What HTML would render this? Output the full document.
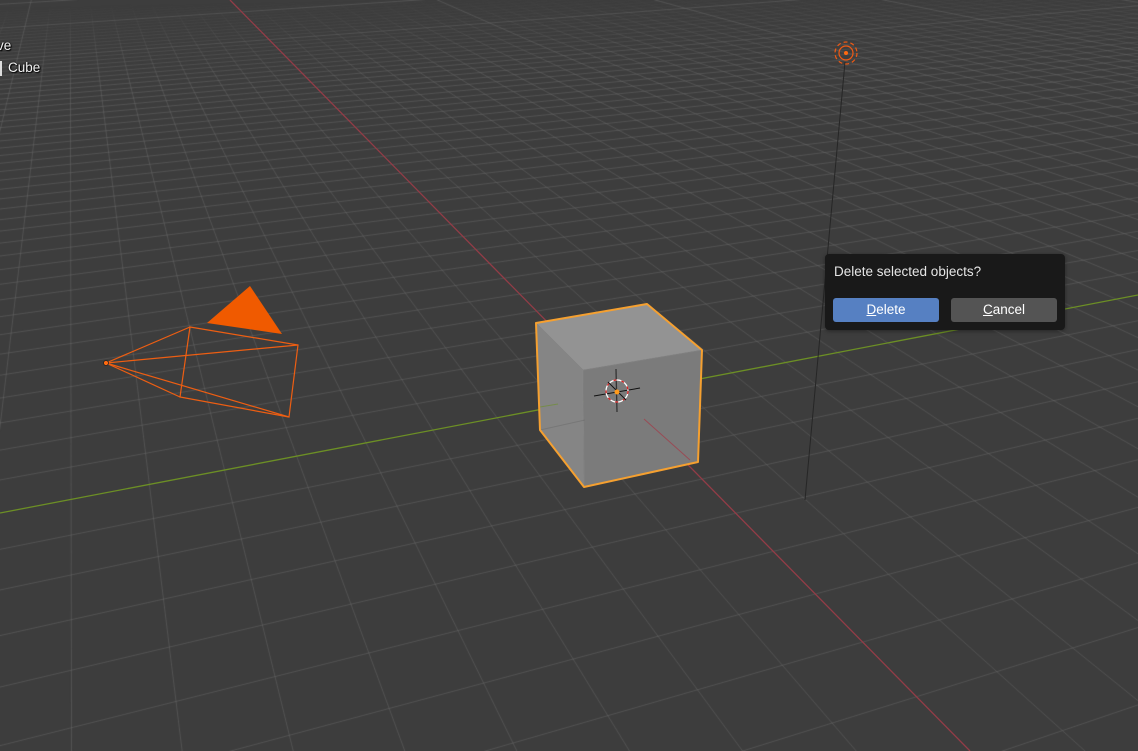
<!DOCTYPE html>
<html><head><meta charset="utf-8">
<style>
html,body{margin:0;padding:0;width:1138px;height:751px;overflow:hidden;background:#3d3d3d;font-family:"Liberation Sans",sans-serif;}
#c{position:absolute;left:0;top:0}
svg{position:absolute;left:0;top:0}
.t{position:absolute;color:#f2f2f2;font-size:13.5px;text-shadow:0 0 2px #000,1px 1px 1px #000;white-space:nowrap}
#dlg{position:absolute;left:825px;top:254px;width:240px;height:76px;background:#191919;border-radius:4px;box-shadow:0 1px 4px rgba(0,0,0,.4)}
#dlg .q{position:absolute;left:9px;top:10px;color:#e6e6e6;font-size:13.5px}
.b{position:absolute;top:44px;height:24px;width:106px;border-radius:3px;color:#fff;font-size:13.5px;line-height:24px;text-align:center}
.b u{text-decoration:underline}
</style></head><body>
<canvas id="c" width="1138" height="751"></canvas>
<svg width="1138" height="751" viewBox="0 0 1138 751">
  <line x1="230" y1="0" x2="970" y2="751" stroke="#933c47" stroke-width="1.3"/>
  <line x1="0" y1="513" x2="1138" y2="295" stroke="#6c8f25" stroke-width="1.3"/>
  <line x1="845" y1="62" x2="805" y2="500" stroke="#262626" stroke-width="1"/>
  <circle cx="846" cy="53" r="7" fill="none" stroke="#f05a14" stroke-width="1.2"/>
  <circle cx="846" cy="53" r="11" fill="none" stroke="#f05a14" stroke-width="1.2" stroke-dasharray="4 3"/>
  <circle cx="846" cy="53" r="2" fill="#ff6a10"/>
  <polygon points="207,323 250,286 282,334" fill="#f05a00"/>
  <g stroke="#ee5e12" stroke-width="1.2" fill="none">
    <polygon points="190,327 298,345 289,417 180,397"/>
    <line x1="106" y1="363" x2="190" y2="327"/>
    <line x1="106" y1="363" x2="298" y2="345"/>
    <line x1="106" y1="363" x2="289" y2="417"/>
    <line x1="106" y1="363" x2="180" y2="397"/>
  </g>
  <circle cx="106" cy="363" r="2.5" fill="#ff6a10" stroke="#222" stroke-width=".8"/>
  <polygon points="536,323 647,304 702,350 583,370" fill="#939393"/>
  <polygon points="536,323 583,370 584,487 540,430" fill="#858585"/>
  <polygon points="583,370 702,350 698,462 584,487" fill="#7b7b7b"/>
  <g stroke="#888" stroke-width="1" opacity=".6">
    <line x1="583" y1="370" x2="536" y2="323"/>
    <line x1="583" y1="370" x2="702" y2="350"/>
    <line x1="583" y1="370" x2="584" y2="487"/>
    <line x1="540" y1="430" x2="585" y2="420" stroke="#6e6e6e"/>
  </g>
  <line x1="540" y1="407" x2="558" y2="404" stroke="#6c8f25" stroke-width="1" opacity=".6"/>
  <line x1="644" y1="419" x2="690" y2="460" stroke="#a0404c" stroke-width="1" opacity=".8"/>
  <polygon points="536,323 647,304 702,350 698,462 584,487 540,430" fill="none" stroke="#f5a030" stroke-width="2" stroke-linejoin="round"/>
  <g>
    <line x1="594" y1="396" x2="640" y2="388" stroke="#111" stroke-width="1"/>
    <line x1="616" y1="369" x2="617" y2="412" stroke="#333" stroke-width="1.3"/>
    <circle cx="617" cy="391" r="11" fill="none" stroke="#fff" stroke-width="1.3"/>
    <circle cx="617" cy="391" r="11" fill="none" stroke="#d82020" stroke-width="1.3" stroke-dasharray="3 5"/>
    <line x1="608" y1="382" x2="626" y2="400" stroke="#111" stroke-width="1"/>
    <circle cx="617" cy="392" r="2.5" fill="#ff9a1a"/>
  </g>
</svg>
<div class="t" style="left:-3px;top:38px">ve</div>
<div style="position:absolute;left:0;top:61px;width:1.5px;height:15px;background:#ddd"></div>
<div class="t" style="left:8px;top:60px">Cube</div>
<div id="dlg">
  <div class="q">Delete selected objects?</div>
  <div class="b" style="left:8px;background:#5680c2"><u>D</u>elete</div>
  <div class="b" style="left:126px;background:#545454"><u>C</u>ancel</div>
</div>
<script>
(function(){
var c=document.getElementById('c').getContext('2d');
var Ox=618.7,Oy=394.4,Ux=70,Uy=-162,Vx=3895,Vy=-233,a=0.044,b=0.0179;
function P(u,v){var w=1+a*u+b*v;return [(Ox+a*u*Ux+b*v*Vx)/w,(Oy+a*u*Uy+b*v*Vy)/w,w];}
function on(p){return p[0]>-50&&p[0]<1190&&p[1]>-50&&p[1]<800;}
c.lineWidth=1;
function seg(p,q,al){if(al<=0.01)return;c.strokeStyle='rgba(120,120,120,'+al+')';c.beginPath();c.moveTo(p[0],p[1]);c.lineTo(q[0],q[1]);c.stroke();}
function alpha(k,w){var m10=(k%10===0);var f=m10?1:Math.max(0,Math.min(1,(3.4-w)/1.1));var g=Math.max(0,Math.min(1,(14-w)/6));return 0.38*(m10?Math.max(f,0.7):f)*g;}
for(var u=-40;u<=200;u++){for(var v=-80;v<=400;v++){
  var p=P(u,v),q=P(u,v+1);if(p[2]<0.03||q[2]<0.03)continue;if(!on(p)&&!on(q))continue;
  if(u!==0)seg(p,q,alpha(Math.abs(u),(p[2]+q[2])/2));
  var r=P(u+1,v);if(r[2]>=0.03&&(on(p)||on(r))&&v!==0)seg(p,r,alpha(Math.abs(v),(p[2]+r[2])/2));
}}
})();
</script>
</body></html>
